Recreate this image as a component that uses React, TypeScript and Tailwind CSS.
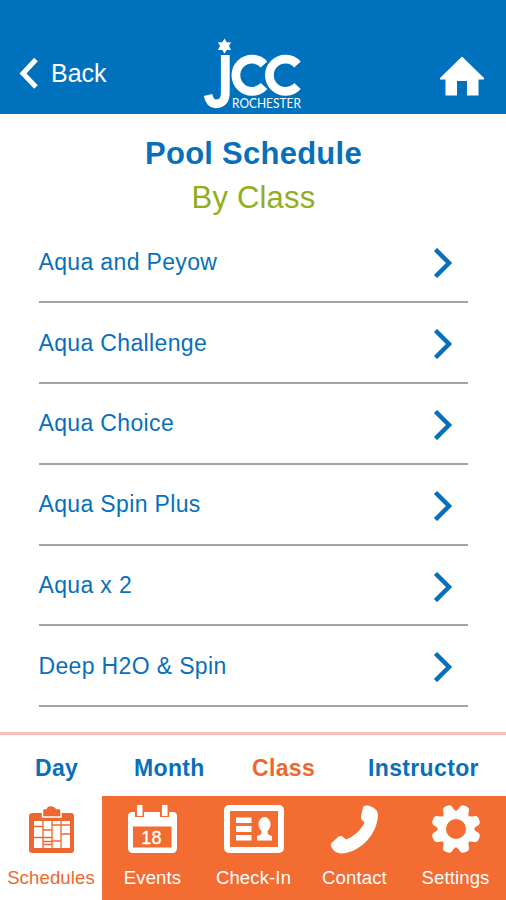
import type { ReactNode } from "react";

const classes = [
  "Aqua and Peyow",
  "Aqua Challenge",
  "Aqua Choice",
  "Aqua Spin Plus",
  "Aqua x 2",
  "Deep H2O & Spin",
];

function Logo() {
  return (
    <svg className="h-[78px] w-[104px]" viewBox="202 36 104 78" fill="none">
      <path
        d="M224.5 38.5l2.2 3.8h4.4l-2.2 3.8 2.2 3.8h-4.4l-2.2 3.8-2.2-3.8h-4.4l2.2-3.8-2.2-3.8h4.4z"
        fill="#fff"
      />
      <path d="M225.300 55V93Q225.300 103.800 215.500 103.800Q210 103.800 208 95" stroke="#fff" strokeWidth="8.800" />
      <path d="M264 64.500A16.100 16.100 0 1 0 264 86" stroke="#fff" strokeWidth="8.800" />
      <path d="M297.500 64.500A16.100 16.100 0 1 0 297.500 86" stroke="#fff" strokeWidth="8.800" />
      <text
        x="232"
        y="108.3"
        textLength="69"
        lengthAdjust="spacingAndGlyphs"
        fontFamily="Lato, 'Liberation Sans', sans-serif"
        fontSize="12.800"
        fill="#fff"
      >
        ROCHESTER
      </text>
    </svg>
  );
}

function ScheduleIcon() {
  return (
    <svg className="h-[50px] w-[60px]" viewBox="0 0 60 50">
      <path
        d="M12 8H50Q53 8 53 11V45Q53 48 50 48H11Q8 48 8 45V11Q8 8 12 8Z"
        fill="#ee6730"
      />
      <path
        d="M25 3.500Q26 .5 30 .5T35.500 3.500H39Q40 3.500 40 5V12H21.500V5Q21.500 3.500 23 3.500Z"
        fill="#ee6730"
        stroke="#fff"
        strokeWidth="1.5"
      />
      <path d="M13 16H49V43H13Z" fill="#fff" />
      <path
        d="M22 16V43M31 16V43M40 16V43M13 21.500H22M13 32.500H31M22 25H31M31 20H40M22 36.500H31M22 39.500H31M40 29H49M31 36H40M40 20H49"
        stroke="#ee6730"
        strokeWidth="1.3"
      />
    </svg>
  );
}

function EventIcon() {
  return (
    <svg className="h-[50px] w-[60px]" viewBox="0 0 60 50">
      <path
        d="M10 7H50Q54 7 54 11V43Q54 48 49 48H10Q5 48 5 43V11Q5 7 10 7Z"
        fill="#fff"
      />
      <path d="M12 0H21V12H12ZM37 0H46V12H37Z" fill="#f36c32" />
      <path d="M14 0H19.500V11H14ZM39 0H44.500V11H39Z" fill="#fff" />
      <path d="M10 21.500H48.500V42.500H10Z" fill="#f36c32" />
      <text
        x="28.500"
        y="38.500"
        textAnchor="middle"
        fontFamily="'Liberation Sans', sans-serif"
        fontSize="18"
        fill="#fff"
        stroke="#fff"
        strokeWidth=".3"
      >
        18
      </text>
    </svg>
  );
}

function CheckInIcon() {
  return (
    <svg className="h-[50px] w-[60px]" viewBox="0 0 60 50">
      <rect x="3" y="3" width="54" height="42" rx="2" fill="none" stroke="#fff" strokeWidth="6" />
      <path
        d="M12 12.500H27.500V18H12ZM12 21H27.500V27H12ZM12 30H27.500V35.500H12Z"
        fill="#fff"
      />
      <ellipse cx="40.500" cy="19.500" rx="6" ry="7.500" fill="#fff" />
      <path
        d="M37.500 24H43.500V28Q44 30 48 31V35.500H33V31Q37 30 37.500 28Z"
        fill="#fff"
      />
    </svg>
  );
}

function PhoneIcon() {
  return (
    <svg className="h-[50px] w-[60px]" viewBox="0 0 60 50">
      <path
        d="M38 2C40 .2 42 .2 44 .7C49.500 2.500 53 5.500 53 10C52.500 27 38 46.500 17 48.500C11.500 48.500 7.500 45.500 6 41C5.500 39.500 6 38.500 7 37.500L13 32C14.500 30.700 16.500 30.700 18 32L21 34.500C28.500 32 36.500 24.500 39.500 17.500L37.500 15.500C36 14 35.800 12.500 36 11Z"
        fill="#fff"
      />
    </svg>
  );
}

function GearIcon() {
  return (
    <svg className="h-[50px] w-[60px]" viewBox="0 0 60 50">
      <g fill="#fff" transform="translate(30 24)">
        {[22.5, 67.5, 112.5, 157.5, 202.5, 247.5, 292.5, 337.5].map((angle) => (
          <path
            key={angle}
            d="M-9 -14Q-5 -18 -5 -22Q-4.500 -25 0 -25T5 -22Q5 -18 9 -14Z"
            transform={`rotate(${angle})`}
          />
        ))}
        <circle r="14" fill="none" stroke="#fff" strokeWidth="8" />
      </g>
    </svg>
  );
}

const navigation: { label: string; icon: ReactNode }[] = [
  { label: "Schedules", icon: <ScheduleIcon /> },
  { label: "Events", icon: <EventIcon /> },
  { label: "Check-In", icon: <CheckInIcon /> },
  { label: "Contact", icon: <PhoneIcon /> },
  { label: "Settings", icon: <GearIcon /> },
];

export default function App() {
  return (
    <div className="flex h-[900px] w-[506px] flex-col overflow-hidden bg-white font-['Liberation_Sans',Arial,sans-serif] text-[#0870bb]">
      <header className="grid h-[114px] shrink-0 grid-cols-[202px_104px_1fr] bg-[#0072bd] pt-9 text-white">
        <button className="flex h-[74px] items-center pl-[19px] text-[25px]">
          <svg className="mr-3 h-8 w-5" viewBox="0 0 20 32" fill="none">
            <path d="M17 2.500L4 16.500L17 30" stroke="currentColor" strokeWidth="5" />
          </svg>
          <span className="pt-px">Back</span>
        </button>
        <Logo />
        <button aria-label="Home" className="flex justify-end pt-5 pr-[22px]">
          <svg className="h-10 w-11" viewBox="0 0 44 40">
            <path d="M22 .5L44 22V23.500H38.500V39.500H27V25H17V39.500H5.500V23.500H0V22Z" fill="currentColor" />
          </svg>
        </button>
      </header>

      <main className="flex h-[618px] shrink-0 flex-col">
        <h1 className="mt-[18px] pl-px text-center text-[31px] leading-[44px] font-bold tracking-[0.250px]">
          Pool Schedule
        </h1>
        <h2 className="pl-px text-center text-[31px] leading-[44px] tracking-[0.200px] text-[#93ad20]">
          By Class
        </h2>
        <ul className="mx-[38.500px] mt-0.5">
          {classes.map((name) => (
            <li
              key={name}
              className="flex h-[80.900px] items-center justify-between border-b-2 border-[#a3a3a3] pr-[15px] text-[23px] tracking-[0.350px]"
            >
              <span className="pt-px">{name}</span>
              <svg className="mt-[3px] h-[30px] w-5" viewBox="0 0 20 30" fill="none">
                <path d="M2.500 1.500L16 15L2.500 28.500" stroke="currentColor" strokeWidth="4.500" />
              </svg>
            </li>
          ))}
        </ul>
      </main>

      <nav className="flex h-16 shrink-0 items-center border-t-[3px] border-[#f8c0b6] pt-[5px] pl-[35px] text-[23px] font-bold tracking-[0.350px]">
        <span className="w-[99px]">Day</span>
        <span className="w-[118px]">Month</span>
        <span className="w-[116px] text-[#ee6730]">Class</span>
        <span>Instructor</span>
      </nav>

      <footer className="grid h-[104px] shrink-0 grid-cols-[102px_repeat(4,101px)] bg-[#f36c32] text-white">
        {navigation.map(({ label, icon }) => (
          <button
            key={label}
            className="flex flex-col items-center pt-[9px] text-[18.500px] leading-6 tracking-[0.150px] first:bg-white first:text-[#ee6730]"
          >
            {icon}
            <span className="mt-[11px]">{label}</span>
          </button>
        ))}
      </footer>
    </div>
  );
}
